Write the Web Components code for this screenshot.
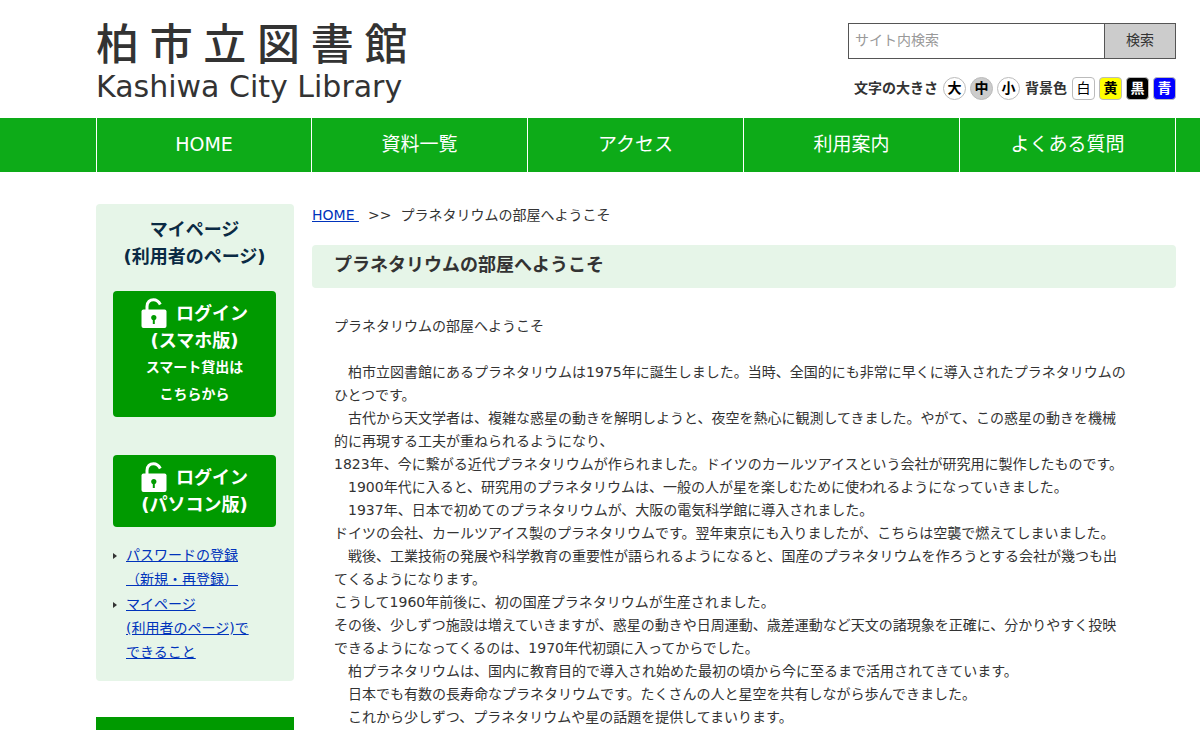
<!DOCTYPE html>
<html lang="ja">
<head>
<meta charset="utf-8">
<title>柏市立図書館 - プラネタリウムの部屋へようこそ</title>
<style>
body { margin: 0; background: #fff; color: #333; font: 14px/23px "DejaVu Sans", "Noto Sans CJK JP", sans-serif; }
</style>
</head>
<body>
<library-page></library-page>

<template id="library-page">
  <style>
    :host { display: block; --side-left: 8%; --side-right: 2%; }
    .columns { display: grid; grid-template-columns: 198px minmax(0, 1fr); gap: 18px; align-items: start; padding: 32px var(--side-right) 0 var(--side-left); }
    aside { display: grid; gap: 36px; }
    .banner { height: 13px; background: #009a00; }
  </style>
  <site-header></site-header>
  <site-nav></site-nav>
  <div class="columns">
    <aside>
      <my-page-panel></my-page-panel>
      <div class="banner"></div>
    </aside>
    <article-view>
      <span slot="title">プラネタリウムの部屋へようこそ</span>
      プラネタリウムの部屋へようこそ<br>
      <br>
      　柏市立図書館にあるプラネタリウムは1975年に誕生しました。当時、全国的にも非常に早くに導入されたプラネタリウムのひとつです。<br>
      　古代から天文学者は、複雑な惑星の動きを解明しようと、夜空を熱心に観測してきました。やがて、この惑星の動きを機械的に再現する工夫が重ねられるようになり、<br>
      1823年、今に繋がる近代プラネタリウムが作られました。ドイツのカールツアイスという会社が研究用に製作したものです。<br>
      　1900年代に入ると、研究用のプラネタリウムは、一般の人が星を楽しむために使われるようになっていきました。<br>
      　1937年、日本で初めてのプラネタリウムが、大阪の電気科学館に導入されました。<br>
      ドイツの会社、カールツアイス製のプラネタリウムです。翌年東京にも入りましたが、こちらは空襲で燃えてしまいました。<br>
      　戦後、工業技術の発展や科学教育の重要性が語られるようになると、国産のプラネタリウムを作ろうとする会社が幾つも出てくるようになります。<br>
      こうして1960年前後に、初の国産プラネタリウムが生産されました。<br>
      その後、少しずつ施設は増えていきますが、惑星の動きや日周運動、歳差運動など天文の諸現象を正確に、分かりやすく投映できるようになってくるのは、1970年代初頭に入ってからでした。<br>
      　柏プラネタリウムは、国内に教育目的で導入され始めた最初の頃から今に至るまで活用されてきています。<br>
      　日本でも有数の長寿命なプラネタリウムです。たくさんの人と星空を共有しながら歩んできました。<br>
      　これから少しずつ、プラネタリウムや星の話題を提供してまいります。
    </article-view>
  </div>
</template>

<template id="site-header">
  <style>
    :host { display: flex; justify-content: space-between; align-items: flex-start; box-sizing: border-box; min-height: 118px; padding: 23px var(--side-right) 0 var(--side-left); }
    .logo { display: block; color: #333; text-decoration: none; white-space: nowrap; }
    .ja { display: block; font: 500 43px/44px Roboto, "Noto Sans CJK JP", sans-serif; }
    .en { display: block; font-size: 30px; line-height: 40px; }
    .tools { display: grid; gap: 18px; justify-items: end; }
    form { display: flex; width: 328px; height: 36px; box-sizing: border-box; border: 1px solid #555; }
    input { flex: 1; min-width: 0; border: 0; padding: 0 6px 2px; font: inherit; color: #333; background: #fff; }
    input::placeholder { color: #999; opacity: 1; }
    form button { width: 71px; border: 0; border-left: 1px solid #555; padding: 0 0 2px; background: #ccc; color: #333; font: inherit; }
    .settings { display: flex; align-items: center; gap: 5px; font-weight: bold; }
    .set { display: flex; gap: 4px; }
  </style>
  <a class="logo" href="#"><span class="ja">柏 市 立 図 書 館</span><span class="en">Kashiwa City Library</span></a>
  <div class="tools">
    <form role="search">
      <input type="text" placeholder="サイト内検索" aria-label="サイト内検索">
      <button type="button">検索</button>
    </form>
    <div class="settings">
      <span>文字の大きさ</span>
      <div class="set">
        <option-chip class="round">大</option-chip>
        <option-chip class="round gray">中</option-chip>
        <option-chip class="round">小</option-chip>
      </div>
      <span>背景色</span>
      <div class="set">
        <option-chip class="plain">白</option-chip>
        <option-chip class="yellow">黄</option-chip>
        <option-chip class="black">黒</option-chip>
        <option-chip class="blue">青</option-chip>
      </div>
    </div>
  </div>
</template>

<template id="option-chip">
  <style>
    :host { display: block; --bg: #fff; --fg: #000; --radius: 4px; --weight: bold; }
    :host(.round) { --radius: 50%; }
    :host(.gray) { --bg: #ccc; }
    :host(.plain) { --weight: normal; }
    :host(.yellow) { --bg: #ff0; }
    :host(.black) { --bg: #000; --fg: #fff; }
    :host(.blue) { --bg: #00f; --fg: #fff; }
    button { display: block; box-sizing: border-box; width: 23px; height: 23px; padding: 0; border: 1px solid #bbb; border-radius: var(--radius); background: var(--bg); color: var(--fg); font: inherit; font-weight: var(--weight); line-height: 21px; }
  </style>
  <button type="button"><slot></slot></button>
</template>

<template id="site-nav">
  <style>
    :host { display: block; background: #0dab18; padding: 0 var(--side-right) 0 var(--side-left); }
    nav { display: grid; grid-template-columns: repeat(5, 1fr); }
    a { box-sizing: border-box; height: 54px; border-right: 1px solid #fff; color: #fff; text-align: center; text-decoration: none; font-size: 19px; line-height: 52px; }
    a:first-child { border-left: 1px solid #fff; }
  </style>
  <nav>
    <a href="#">HOME</a><a href="#">資料一覧</a><a href="#">アクセス</a><a href="#">利用案内</a><a href="#">よくある質問</a>
  </nav>
</template>

<template id="login-button">
  <style>
    :host { display: block; }
    a { display: block; padding: 9px 0; border-radius: 4px; background: #009a00; color: #fff; text-align: center; text-decoration: none; font-size: 18px; line-height: 27px; font-weight: bold; }
    .head { display: flex; justify-content: center; gap: 9px; height: 27px; }
    svg { width: 26px; height: 30px; margin-top: -2px; }
    ::slotted(small) { display: block; font-size: 14px; }
  </style>
  <a href="#">
    <span class="head">
      <svg viewBox="0 0 26 30" aria-hidden="true">
        <path d="M6 13V8.500C6 4 9 1.800 12.500 1.800S18 4 19.300 6.500" fill="none" stroke="#fff" stroke-width="3"/>
        <rect x="0.500" y="11.500" width="25" height="18.500" rx="2" fill="#fff"/>
        <circle cx="12.800" cy="19.500" r="2.600" fill="#009a00"/>
        <path d="M11.800 20h2v6h-2z" fill="#009a00"/>
      </svg>
      <span>ログイン</span>
    </span>
    <slot></slot>
  </a>
</template>

<template id="my-page-panel">
  <style>
    :host { display: block; box-sizing: border-box; padding: 12px 18px 17px 17px; border-radius: 4px; background: #e6f5e8; }
    h2 { margin: 0 0 21px; color: #0a2a44; text-align: center; white-space: nowrap; font-size: 18px; line-height: 27px; font-weight: bold; }
    .logins { display: grid; gap: 38px; }
    ul { display: grid; gap: 1px; list-style: none; margin: 16px 0 0; padding: 0; line-height: 24px; }
    li { display: flex; gap: 9px; }
    li::before { content: ""; flex: none; width: 4px; height: 6px; margin-top: 10px; background: #333; clip-path: polygon(0 0, 100% 50%, 0 100%); }
    a { color: #03b; white-space: nowrap; }
  </style>
  <h2>マイページ<br>(利用者のページ)</h2>
  <div class="logins">
    <login-button>(スマホ版)<small>スマート貸出は</small><small>こちらから</small></login-button>
    <login-button>(パソコン版)</login-button>
  </div>
  <ul>
    <li><a href="#">パスワードの登録<br>（新規・再登録）</a></li>
    <li><a href="#">マイページ<br>(利用者のページ)で<br>できること</a></li>
  </ul>
</template>

<template id="article-view">
  <style>
    :host { display: block; }
    .crumbs { display: flex; gap: 9px; margin-bottom: 18px; }
    .crumbs a { color: #03b; }
    h1 { margin: 0 0 27px; padding: 6px 22px 10px; border-radius: 4px; background: #e6f5e8; font-size: 18px; line-height: 27px; }
    .body { padding: 0 48px 0 22px; }
  </style>
  <nav class="crumbs"><a href="#">HOME&nbsp;</a><span>&gt;&gt;</span><span>プラネタリウムの部屋へようこそ</span></nav>
  <h1><slot name="title"></slot></h1>
  <div class="body"><slot></slot></div>
</template>

<script>
for (const name of ["library-page", "site-header", "option-chip", "site-nav", "login-button", "my-page-panel", "article-view"]) {
  customElements.define(name, class extends HTMLElement {
    constructor() {
      super();
      const template = document.getElementById(name);
      this.attachShadow({ mode: "open" }).append(template.content.cloneNode(true));
    }
  });
}
</script>
</body>
</html>
